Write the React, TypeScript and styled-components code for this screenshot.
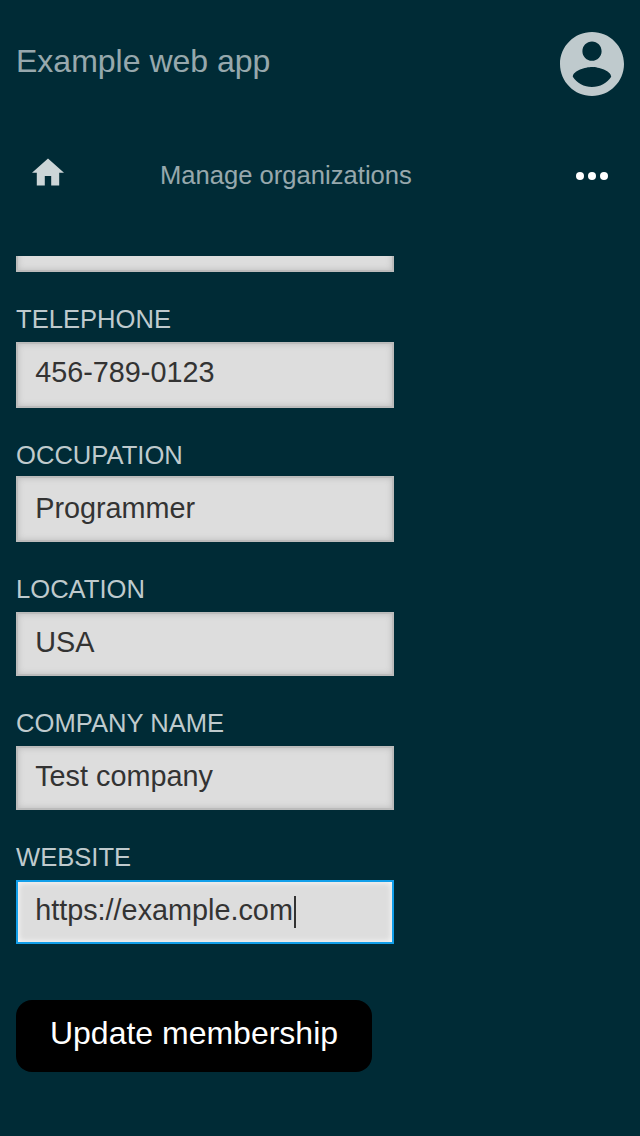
import React from 'react';
import styled, { createGlobalStyle, css } from 'styled-components';

const GlobalStyle = createGlobalStyle`
  * { box-sizing: border-box; }
  body {
    margin: 0;
    background: #002b36;
    font-family: "Liberation Sans", Arial, sans-serif;
  }
`;

const Page = styled.div`
  display: flex;
  flex-direction: column;
  height: 1136px;
  overflow: hidden;
  background: #002b36;
`;

const Header = styled.header`
  display: flex;
  justify-content: space-between;
  align-items: center;
  height: 128px;
  padding: 0 16px;
`;

const Title = styled.h1`
  margin: 0;
  padding-bottom: 6px;
  font-size: 32px;
  font-weight: 400;
  line-height: 36px;
  color: rgba(255, 255, 255, 0.6);
`;

const Avatar = styled.svg`
  display: block;
  width: 64px;
  height: 64px;
  fill: #bfcacd;
`;

const Nav = styled.nav`
  display: grid;
  grid-template-columns: 128px 1fr 32px;
  align-items: center;
  height: 96px;
  margin-bottom: 32px;
  padding: 0 32px;
`;

const HomeIcon = styled.svg`
  display: block;
  width: 32px;
  height: 28px;
  margin-bottom: 8px;
  fill: #ccd5d7;
`;

const NavTitle = styled.span`
  padding-bottom: 2px;
  font-size: 25.6px;
  line-height: 30px;
  color: rgba(255, 255, 255, 0.6);
`;

const Dots = styled.svg`
  display: block;
  width: 32px;
  height: 8px;
  fill: #fff;
`;

const Form = styled.form`
  display: flex;
  flex-direction: column;
  align-items: flex-start;
  gap: 32px;
  flex: 1;
  min-height: 0;
  padding: 0 16px;
  overflow: hidden;
`;

const Field = styled.div<{ $gap?: number }>`
  display: flex;
  flex-direction: column;
  flex: none;
  gap: ${({ $gap = 8 }) => $gap}px;
  width: 378px;
`;

const Label = styled.span`
  height: 30px;
  font-size: 25.6px;
  line-height: 30px;
  text-transform: uppercase;
  color: #bfcacd;
`;

const Input = styled.div<{ $height?: number; $inset?: number; $focused?: boolean }>`
  display: flex;
  align-items: flex-start;
  height: ${({ $height = 64 }) => $height}px;
  padding: ${({ $inset = 12 }) => $inset}px 17.2px 0;
  border: 2px solid #bbb;
  background: #ddd;
  box-shadow: inset 0 0 6px #bbb;
  font-size: 28.8px;
  line-height: 32px;
  color: #333;
  ${({ $focused }) =>
    $focused &&
    css`
      border-color: #129fea;
      box-shadow: inset 0 0 6px #fff;
    `}
`;

const ClippedInput = styled(Input)`
  flex: none;
  width: 378px;
  height: 64px;
  margin-top: -48px;
`;

const Caret = styled.span`
  width: 2px;
  height: 32px;
  margin-top: 2px;
  margin-left: 1px;
  background: #333;
`;

const SubmitButton = styled.button`
  width: 356px;
  height: 72px;
  margin: 24px 0 0;
  padding: 0 0 7px;
  border: 0;
  border-radius: 16px;
  background: #000;
  color: #fff;
  font: 32px/36px "Liberation Sans", Arial, sans-serif;
`;

const fields = [
  { label: 'Telephone', value: '456-789-0123', height: 66 },
  { label: 'Occupation', value: 'Programmer', height: 66, gap: 6, inset: 14 },
  { label: 'Location', value: 'USA' },
  { label: 'Company name', value: 'Test company' },
  { label: 'Website', value: 'https://example.com', focused: true },
];

export default function App() {
  return (
    <Page>
      <GlobalStyle />
      <Header>
        <Title>Example web app</Title>
        <Avatar viewBox="2 2 20 20">
          <path d="M12 2C6.48 2 2 6.48 2 12s4.48 10 10 10 10-4.48 10-10S17.52 2 12 2zm0 3c1.66 0 3 1.34 3 3s-1.34 3-3 3-3-1.34-3-3 1.34-3 3-3zm0 14.2c-2.5 0-4.71-1.28-6-3.22.03-1.99 4-3.08 6-3.08 1.99 0 5.97 1.09 6 3.08-1.29 1.94-3.5 3.22-6 3.22z" />
        </Avatar>
      </Header>
      <Nav>
        <HomeIcon viewBox="2 2.75 20 17.5">
          <path d="M10 20v-6h4v6h5v-8h3L12 3 2 12h3v8z" />
        </HomeIcon>
        <NavTitle>Manage organizations</NavTitle>
        <Dots viewBox="0 0 32 8">
          <circle cx="4" cy="4" r="4" />
          <circle cx="16" cy="4" r="4" />
          <circle cx="28" cy="4" r="4" />
        </Dots>
      </Nav>
      <Form>
        <ClippedInput />
        {fields.map((f) => (
          <Field key={f.label} $gap={f.gap}>
            <Label>{f.label}</Label>
            <Input $height={f.height} $inset={f.inset} $focused={f.focused}>
              {f.value}
              {f.focused && <Caret />}
            </Input>
          </Field>
        ))}
        <SubmitButton type="button">Update membership</SubmitButton>
      </Form>
    </Page>
  );
}
